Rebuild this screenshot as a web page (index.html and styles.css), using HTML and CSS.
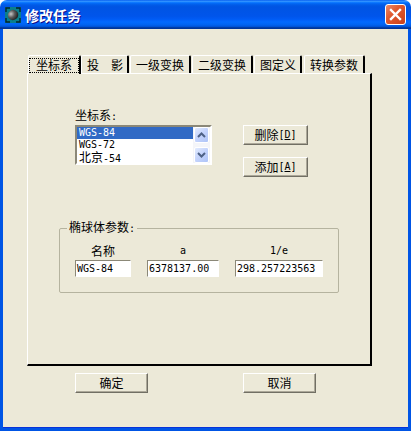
FILE: index.html
```html
<!DOCTYPE html>
<html lang="zh-CN">
<head>
  <meta charset="UTF-8" />
  <title>修改任务</title>
  <link rel="stylesheet" href="styles.css">
</head>
<body>
  <div class="window">
    <div class="titlebar">
      <svg class="app-icon" width="16" height="16" viewBox="0 0 16 16">
        <defs>
          <radialGradient id="ball" cx="0.4" cy="0.3" r="0.75">
            <stop offset="0" stop-color="#c8c8c8" />
            <stop offset="0.45" stop-color="#5e5e5e" />
            <stop offset="1" stop-color="#151515" />
          </radialGradient>
        </defs>
        <rect x="0" y="0" width="16" height="16" fill="#0a7f8c" />
        <path d="M1 5V1H5M11 1H15V5M15 11V15H11M5 15H1V11" fill="none" stroke="#04262c" stroke-width="1.4" />
        <ellipse cx="8" cy="8" rx="5.4" ry="5" fill="url(#ball)" transform="rotate(-35 8 8)" />
      </svg>
      <div class="title">修改任务</div>
      <div class="close-btn">
        <svg width="13" height="13" viewBox="0 0 13 13">
          <path d="M2 2L11 11M11 2L2 11" stroke="#fff" stroke-width="2.4" stroke-linecap="square" />
        </svg>
      </div>
    </div>

    <div class="client">
      <div class="tabs">
        <div class="tab tab-active"><span class="tab-focus">坐标系</span></div>
        <div class="tab">投<span class="tab-space"></span>影</div>
        <div class="tab tab-wide">一级变换</div>
        <div class="tab tab-wide">二级变换</div>
        <div class="tab">图定义</div>
        <div class="tab tab-wide tab-last">转换参数</div>
      </div>

      <div class="page">
        <div class="coord-block">
          <div class="coord-label">坐标系<span class="lat">:</span></div>
          <div class="coord-row">
            <div class="listbox">
              <div class="list-items">
                <div class="list-item selected lat">WGS-84</div>
                <div class="list-item lat">WGS-72</div>
                <div class="list-item cjk">北京<span class="lat">-54</span></div>
              </div>
              <div class="scrollbar">
                <div class="scroll-btn">
                  <svg width="9" height="6" viewBox="0 0 9 6"><path d="M1 5L4.5 1.5L8 5" fill="none" stroke="#4d6185" stroke-width="2" /></svg>
                </div>
                <div class="scroll-btn">
                  <svg width="9" height="6" viewBox="0 0 9 6"><path d="M1 1L4.5 4.5L8 1" fill="none" stroke="#4d6185" stroke-width="2" /></svg>
                </div>
              </div>
            </div>
            <div class="side-buttons">
              <div class="btn btn-side">删除<span class="lat">[<u>D</u>]</span></div>
              <div class="btn btn-side">添加<span class="lat">[<u>A</u>]</span></div>
            </div>
          </div>
        </div>

        <fieldset class="group">
          <legend class="group-title">椭球体参数<span class="lat">:</span></legend>
          <div class="param-grid">
            <div class="param-head">名称</div>
            <div class="param-head lat">a</div>
            <div class="param-head lat">1/e</div>
            <div class="field lat">WGS-84</div>
            <div class="field lat">6378137.00</div>
            <div class="field lat">298.257223563</div>
          </div>
        </fieldset>
      </div>

      <div class="footer">
        <div class="btn btn-main">确定</div>
        <div class="btn btn-main">取消</div>
      </div>
    </div>
  </div>
</body>
</html>
```

FILE: styles.css
```css
html, body {
  margin: 0;
  padding: 0;
  width: 411px;
  height: 431px;
  overflow: hidden;
  background: #fff;
  font-family: "Noto Sans CJK SC", sans-serif;
  font-size: 12px;
  line-height: 12px;
  color: #000;
}

.lat {
  font-family: "DejaVu Sans Mono", "Liberation Mono", monospace;
  font-size: 10px;
}

.window {
  width: 411px;
  height: 431px;
  display: flex;
  flex-direction: column;
}

/* title bar */
.titlebar {
  height: 29px;
  flex: none;
  display: flex;
  align-items: center;
  padding: 1px 5px 0 5px;
  box-sizing: border-box;
  border-radius: 7px 7px 0 0;
  background: linear-gradient(to bottom,
    #0058ee 0%, #3593ff 4%, #288eff 6%, #127dff 8%, #036ffc 10%,
    #0262ee 14%, #0057e5 20%, #0054e3 24%, #0055eb 56%, #005bf5 66%,
    #026afe 76%, #0062ef 86%, #0052d6 92%, #0040ab 94%, #003092 100%);
}

.app-icon {
  flex: none;
}

.title {
  flex: 1;
  margin-left: 4px;
  color: #fff;
  font-size: 14px;
  line-height: 16px;
  font-weight: 700;
  text-shadow: 1px 1px 0 #0f1089;
}

.close-btn {
  width: 21px;
  height: 21px;
  margin-top: -1px;
  box-sizing: border-box;
  display: flex;
  align-items: center;
  justify-content: center;
  border: 1px solid #fff;
  border-radius: 3px;
  background: linear-gradient(135deg, #e98a6c 0%, #e0592f 40%, #c8401a 100%);
}

/* client area */
.client {
  flex: 1;
  display: flex;
  flex-direction: column;
  padding: 26px 0 0 24px;
  background: #ece9d8;
  border: solid #0055e5;
  border-width: 0 3px 3px 3px;
  box-shadow: inset 0 -1px 0 #0831d9;
}

/* tabs */
.tabs {
  display: flex;
  gap: 1px;
  padding-left: 1px;
  height: 18px;
}

.tab {
  height: 18px;
  box-sizing: border-box;
  display: flex;
  align-items: center;
  padding: 0 4px 0 5px;
  background: #ece9d8;
  border-top: 1px solid #fff;
  border-left: 1px solid #fff;
  border-right: 2px solid #000;
  border-radius: 2px 2px 0 0;
}

.tab-wide {
  padding-right: 5px;
}

.tab-last {
  margin-left: 1px;
}

.tab-space {
  width: 12px;
}

.tab-active {
  padding: 0;
  margin-right: -1px;
  height: 19px;
  position: relative;
  z-index: 1;
}

.tab-focus {
  padding: 1px 7px 2px 7px;
  outline: 1px dotted #000;
  outline-offset: -1px;
}

/* page */
.page {
  width: 345px;
  height: 293px;
  box-sizing: border-box;
  padding: 35px 0 0 31px;
  background: #ece9d8;
  border-top: 1px solid #fff;
  border-left: 1px solid #fff;
  border-right: 2px solid #000;
  border-bottom: 2px solid #000;
}

.coord-block {
  padding-left: 16px;
}

.coord-label {
  height: 16px;
}

.coord-row {
  display: flex;
  gap: 31px;
}

.listbox {
  width: 137px;
  height: 40px;
  box-sizing: border-box;
  display: flex;
  background: #fff;
  border: 2px solid;
  border-color: #8b8878 #fff #fff #8b8878;
}

.list-items {
  flex: 1;
  min-width: 0;
}

.list-item {
  height: 12px;
  line-height: 12px;
  padding-left: 2px;
}

.list-item.cjk {
  font-size: 12px;
}

.list-item.selected {
  color: #fff;
  background: #316ac5;
}

.scrollbar {
  width: 17px;
  flex: none;
  display: flex;
  flex-direction: column;
  justify-content: space-between;
  background: #f4f5f9;
  padding: 0 1px;
  box-sizing: border-box;
}

.scroll-btn {
  height: 16px;
  display: flex;
  align-items: center;
  justify-content: center;
  background: linear-gradient(135deg, #e2ebfe 0%, #c3d3fc 50%, #aec4f7 100%);
  border: 1px solid #fff;
  border-radius: 2px;
  box-sizing: border-box;
}

.side-buttons {
  display: flex;
  flex-direction: column;
  gap: 12px;
}

/* buttons */
.btn {
  box-sizing: border-box;
  display: flex;
  align-items: center;
  justify-content: center;
  background: #ece9d8;
  border-top: 1px solid #fff;
  border-left: 1px solid #fff;
  border-right: 1px solid #716f64;
  border-bottom: 1px solid #716f64;
  box-shadow: inset -1px -1px 0 #aca899;
}

.btn-side {
  width: 65px;
  height: 20px;
}

.btn-main {
  width: 73px;
  height: 20px;
}

/* ellipsoid group */
.group {
  width: 280px;
  height: 72px;
  box-sizing: border-box;
  margin: 44px 0 0 0;
  padding: 0;
  border: 1px solid #b5b39f;
  border-radius: 2px;
  min-width: 0;
}

.group-title {
  margin-left: 7px;
  padding: 0 2px;
  line-height: 12px;
}

.param-grid {
  display: grid;
  grid-template-columns: 56px 72px 88px;
  column-gap: 16px;
  row-gap: 3px;
  padding: 10px 0 0 15px;
}

.param-head {
  text-align: center;
  height: 12px;
  line-height: 12px;
}

.field {
  height: 17px;
  line-height: 15px;
  box-sizing: border-box;
  padding-left: 1px;
  white-space: nowrap;
  background: #fff;
  border: 1px solid;
  border-color: #8b8878 #fff #fff #8b8878;
  overflow: hidden;
}

/* dialog buttons */
.footer {
  display: flex;
  gap: 95px;
  padding: 7px 0 0 48px;
}
```
